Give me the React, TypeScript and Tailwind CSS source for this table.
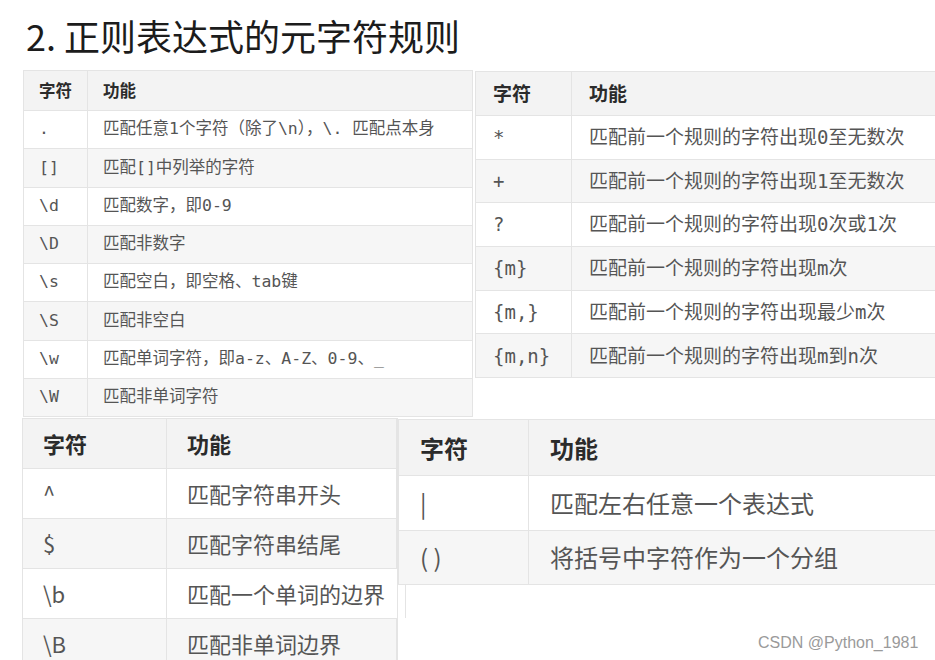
type Row = [string, string]

const basicRows: Row[] = [
  [".", "匹配任意1个字符（除了\\n），\\. 匹配点本身"],
  ["[]", "匹配[]中列举的字符"],
  ["\\d", "匹配数字，即0-9"],
  ["\\D", "匹配非数字"],
  ["\\s", "匹配空白，即空格、tab键"],
  ["\\S", "匹配非空白"],
  ["\\w", "匹配单词字符，即a-z、A-Z、0-9、_"],
  ["\\W", "匹配非单词字符"],
]

const countRows: Row[] = [
  ["*", "匹配前一个规则的字符出现0至无数次"],
  ["+", "匹配前一个规则的字符出现1至无数次"],
  ["?", "匹配前一个规则的字符出现0次或1次"],
  ["{m}", "匹配前一个规则的字符出现m次"],
  ["{m,}", "匹配前一个规则的字符出现最少m次"],
  ["{m,n}", "匹配前一个规则的字符出现m到n次"],
]

const anchorRows: Row[] = [
  ["^", "匹配字符串开头"],
  ["$", "匹配字符串结尾"],
  ["\\b", "匹配一个单词的边界"],
  ["\\B", "匹配非单词边界"],
]

const groupRows: Row[] = [
  ["|", "匹配左右任意一个表达式"],
  ["( )", "将括号中字符作为一个分组"],
]

const mono = "font-['DejaVu_Sans_Mono','Noto_Sans_CJK_SC',monospace]"
const sans = "font-['Noto_Sans_CJK_SC','Noto_Sans',sans-serif]"

function RuleTable(props: {
  rows: Row[]
  className: string
  headH: string
  rowH: string
  firstW: string
  size: string
  pad: string
  font: string
}) {
  const { rows, className, headH, rowH, firstW, size, pad, font } = props
  return (
    <div className={`border-l border-t border-[#e4e4e4] ${size} ${className}`}>
      <div className={`flex ${headH} bg-[#f3f3f3] border-b border-[#e4e4e4] font-bold text-[#2b2b2b] ${sans}`}>
        <div className={`${firstW} shrink-0 ${pad} flex items-center border-r border-[#e4e4e4]`}>字符</div>
        <div className={`flex-1 ${pad} flex items-center border-r border-[#e4e4e4]`}>功能</div>
      </div>
      {rows.map(([code, desc], i) => (
        <div
          key={code}
          className={`flex ${rowH} border-b border-[#e4e4e4] text-[#555] ${font} ${i % 2 ? "bg-[#f6f6f6]" : "bg-white"}`}
        >
          <div className={`${firstW} shrink-0 ${pad} flex items-center border-r border-[#e4e4e4] whitespace-pre`}>{code}</div>
          <div className={`flex-1 ${pad} flex items-center border-r border-[#e4e4e4] whitespace-pre`}>{desc}</div>
        </div>
      ))}
    </div>
  )
}

export default function App() {
  return (
    <div className="relative w-[935px] h-[660px] overflow-hidden bg-white">
      <div className={`h-[70px] flex items-center pl-[26px] text-[36px] text-[#1c1c1c] ${sans}`}>
        2. 正则表达式的元字符规则
      </div>

      <div className="flex h-[348px] items-start">
        <RuleTable
          rows={basicRows}
          className="ml-[23px] w-[450px] shrink-0"
          headH="h-[40px]"
          rowH="h-[38.25px]"
          firstW="w-[64px]"
          size="text-[16.5px]"
          pad="px-[15px]"
          font={mono}
        />
        <div className="ml-[2px] mt-[1px] w-[500px] shrink-0 h-[347px] bg-white">
          <RuleTable
            rows={countRows}
            className="w-[500px]"
            headH="h-[44px]"
            rowH="h-[43.7px]"
            firstW="w-[96px]"
            size="text-[19px]"
            pad="px-[17px]"
            font={mono}
          />
        </div>
      </div>

      <div className="flex items-start">
        <RuleTable
          rows={anchorRows}
          className="ml-[22px] w-[376px] shrink-0 border-r"
          headH="h-[50px]"
          rowH="h-[50px]"
          firstW="w-[144px]"
          size="text-[22px]"
          pad="px-[20px]"
          font={sans}
        />
        <RuleTable
          rows={groupRows}
          className="mt-[1px] w-[560px] shrink-0"
          headH="h-[56px]"
          rowH="h-[54.5px]"
          firstW="w-[130px]"
          size="text-[24px]"
          pad="px-[21px]"
          font={sans}
        />
      </div>

      <div className="absolute left-[752px] top-[630px] bg-white/90 px-[6px] py-[1px] text-[16px] text-[#9a9a9a] font-['Liberation_Sans',sans-serif]">
        CSDN @Python_1981
      </div>
    </div>
  )
}
